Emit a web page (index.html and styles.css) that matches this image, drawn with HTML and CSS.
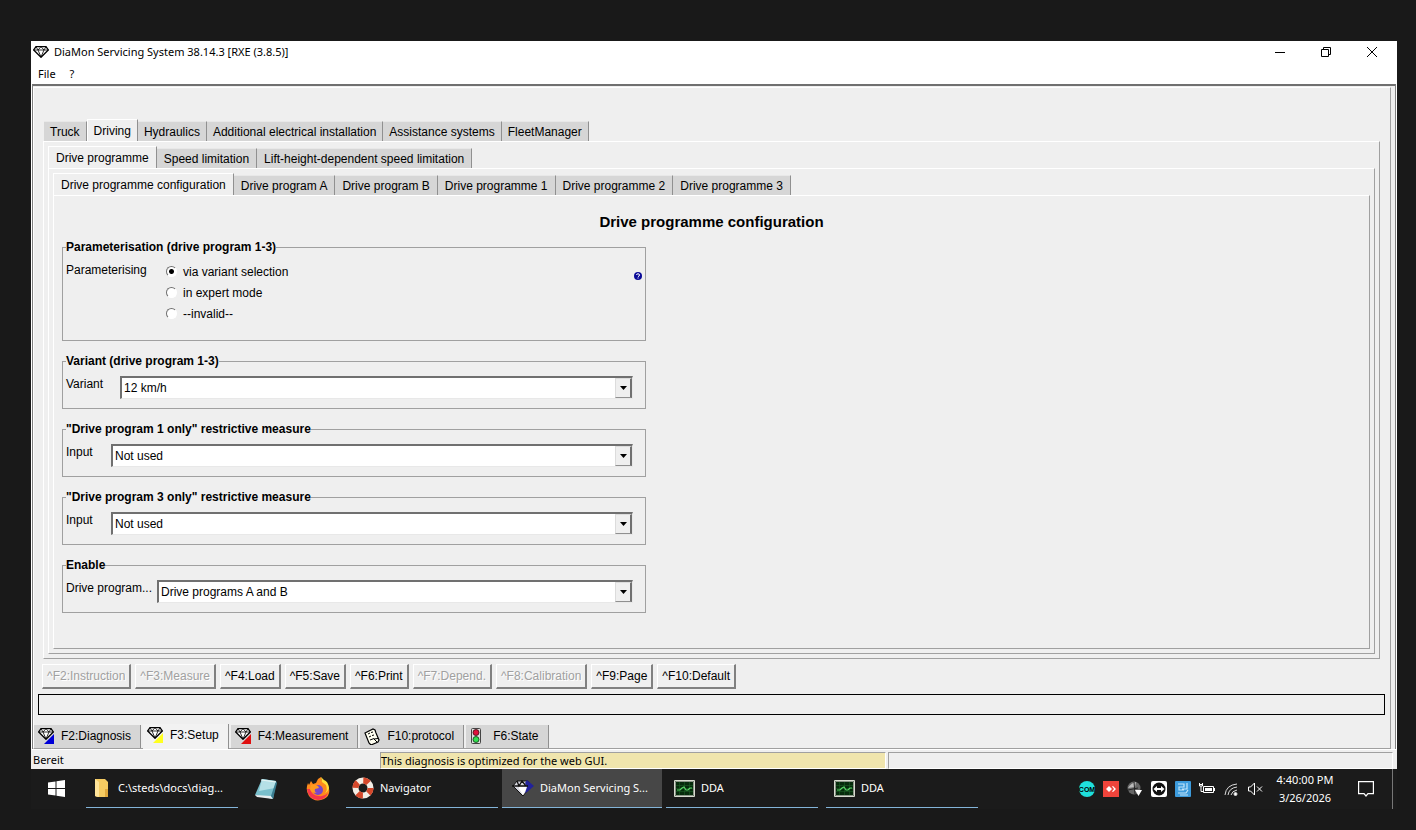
FILE: index.html
```html
<!DOCTYPE html>
<html lang="en">
<head>
    <meta charset="UTF-8">
    <meta name="viewport" content="width=device-width, initial-scale=1.0">
    <title>DiaMon Servicing System</title>
    <link rel="stylesheet" href="styles.css">
</head>
<body>
    <!-- Shared icons -->
    <svg class="sprite" aria-hidden="true">
        <symbol id="gem" viewBox="0 0 16 12">
            <path d="M3 .7h10L15.300 4 8 11.300.7 4z" fill="#fff" stroke="#000" stroke-width="1.300"/>
            <path d="M.7 4h14.600M3 .7L5 4l3-3.300L11 4l2-3.300M5 4l3 7 3-7" fill="none" stroke="#000" stroke-width=".8"/>
        </symbol>
        <symbol id="arrow" viewBox="0 0 7 4">
            <path d="M0 0h7L3.500 4z" fill="#000"/>
        </symbol>
        <symbol id="scope" viewBox="0 0 21 17">
            <path d="M.5.5h20v16H.5z" fill="#062b0c" stroke="#d8dcd0"/>
            <path d="M1.500 1.500h18v14h-18z" fill="none" stroke="#8b9488"/>
            <path d="M2 5.500h17M2 8.500h17M2 11.500h17M5.500 2v13M10.500 2v13M15.500 2v13" stroke="#1b5a25" stroke-width=".6"/>
            <path d="M3 10h3l2-2 2-1 2 3 2 0 2-2h2" fill="none" stroke="#59d867" stroke-width="1.200"/>
        </symbol>
    </svg>

    <div class="window">
        <header class="titlebar">
            <svg class="titlebar-icon"><use href="#gem"/></svg>
            <h1>DiaMon Servicing System 38.14.3 [RXE (3.8.5)]</h1>
            <div class="window-buttons">
                <button type="button" aria-label="Minimize"><svg viewBox="0 0 12 12"><path d="M1 6.500h10"/></svg></button>
                <button type="button" aria-label="Restore"><svg viewBox="0 0 12 12"><path d="M1.500 3.500h7v7h-7zM3.500 3.500v-2h7v7h-2"/></svg></button>
                <button type="button" aria-label="Close"><svg viewBox="0 0 12 12"><path d="M1 1l10 10M11 1L1 11"/></svg></button>
            </div>
        </header>
        <nav class="menubar">
            <button type="button">File</button>
            <button type="button">?</button>
        </nav>

        <main class="workspace">
            <div class="page">
                <div class="tab-group">
                    <div class="tabs" role="tablist">
                        <button type="button" role="tab" class="tab">Truck</button>
                        <button type="button" role="tab" class="tab selected" aria-selected="true">Driving</button>
                        <button type="button" role="tab" class="tab">Hydraulics</button>
                        <button type="button" role="tab" class="tab">Additional electrical installation</button>
                        <button type="button" role="tab" class="tab">Assistance systems</button>
                        <button type="button" role="tab" class="tab">FleetManager</button>
                    </div>
                    <div class="panel">
                        <div class="tabs" role="tablist">
                            <button type="button" role="tab" class="tab selected" aria-selected="true">Drive programme</button>
                            <button type="button" role="tab" class="tab">Speed limitation</button>
                            <button type="button" role="tab" class="tab">Lift-height-dependent speed limitation</button>
                        </div>
                        <div class="panel">
                            <div class="tabs" role="tablist">
                                <button type="button" role="tab" class="tab selected" aria-selected="true">Drive programme configuration</button>
                                <button type="button" role="tab" class="tab">Drive program A</button>
                                <button type="button" role="tab" class="tab">Drive program B</button>
                                <button type="button" role="tab" class="tab">Drive programme 1</button>
                                <button type="button" role="tab" class="tab">Drive programme 2</button>
                                <button type="button" role="tab" class="tab">Drive programme 3</button>
                            </div>
                            <form class="panel config">
                                <h2>Drive programme configuration</h2>

                                <fieldset class="group group-mode">
                                    <legend>Parameterisation (drive program 1-3)</legend>
                                    <span class="caption caption-mode">Parameterising</span>
                                    <div class="options">
                                        <label><input type="radio" name="mode" checked> via variant selection</label>
                                        <label><input type="radio" name="mode"> in expert mode</label>
                                        <label><input type="radio" name="mode"> --invalid--</label>
                                    </div>
                                    <button type="button" class="help" aria-label="Help">
                                        <svg viewBox="0 0 8 8"><circle cx="4" cy="4" r="4" fill="#0b0b98"/><path d="M2.500 3q0-1.200 1.500-1.200T5.500 3 4 4.600M4 5.500v1" fill="none" stroke="#fff"/></svg>
                                    </button>
                                </fieldset>

                                <fieldset class="group">
                                    <legend>Variant (drive program 1-3)</legend>
                                    <label class="caption caption-variant" for="variant">Variant</label>
                                    <div class="combo">
                                        <select id="variant"><option>12 km/h</option></select>
                                        <span class="combo-button"><svg><use href="#arrow"/></svg></span>
                                    </div>
                                </fieldset>

                                <fieldset class="group">
                                    <legend>"Drive program 1 only" restrictive measure</legend>
                                    <label class="caption caption-input" for="input1">Input</label>
                                    <div class="combo">
                                        <select id="input1"><option>Not used</option></select>
                                        <span class="combo-button"><svg><use href="#arrow"/></svg></span>
                                    </div>
                                </fieldset>

                                <fieldset class="group">
                                    <legend>"Drive program 3 only" restrictive measure</legend>
                                    <label class="caption caption-input" for="input3">Input</label>
                                    <div class="combo">
                                        <select id="input3"><option>Not used</option></select>
                                        <span class="combo-button"><svg><use href="#arrow"/></svg></span>
                                    </div>
                                </fieldset>

                                <fieldset class="group">
                                    <legend>Enable</legend>
                                    <label class="caption caption-enable" for="enable">Drive program...</label>
                                    <div class="combo">
                                        <select id="enable"><option>Drive programs A and B</option></select>
                                        <span class="combo-button"><svg><use href="#arrow"/></svg></span>
                                    </div>
                                </fieldset>
                            </form>
                        </div>
                    </div>
                </div>

                <div class="actions">
                    <button type="button" disabled>^F2:Instruction</button>
                    <button type="button" disabled>^F3:Measure</button>
                    <button type="button">^F4:Load</button>
                    <button type="button">^F5:Save</button>
                    <button type="button">^F6:Print</button>
                    <button type="button" disabled>^F7:Depend.</button>
                    <button type="button" disabled>^F8:Calibration</button>
                    <button type="button">^F9:Page</button>
                    <button type="button">^F10:Default</button>
                </div>

                <div class="message" role="status"></div>

                <div class="views" role="tablist">
                    <button type="button" role="tab" class="view">
                        <svg viewBox="0 0 17 17"><path d="M16 6v10H6z" fill="#0000d8"/><use href="#gem" width="16" height="12"/></svg>
                        F2:Diagnosis
                    </button>
                    <button type="button" role="tab" class="view selected" aria-selected="true">
                        <svg viewBox="0 0 17 17"><path d="M16 6v10H6z" fill="#ffff20"/><use href="#gem" width="16" height="12"/></svg>
                        F3:Setup
                    </button>
                    <button type="button" role="tab" class="view">
                        <svg viewBox="0 0 17 17"><path d="M16 6v10H6z" fill="#e01010"/><use href="#gem" width="16" height="12"/></svg>
                        F4:Measurement
                    </button>
                    <button type="button" role="tab" class="view">
                        <svg viewBox="0 0 17 17"><path d="M1 5l8-4 2 1 1 3 3 7-1 2-7 3-2-2z" fill="#fffff0" stroke="#000" stroke-width="1.200"/><path d="M4 6l2-1M7 4.500l2-.5M5 9l2-1M8 7.500l2-.5M6 12l4-1.500M13 14l-3-3 4-.5" fill="none" stroke="#000"/></svg>
                        F10:protocol
                    </button>
                    <button type="button" role="tab" class="view">
                        <svg viewBox="0 0 17 17"><rect x="1.500" y=".5" width="9" height="15" rx="1" fill="#ddd" stroke="#444"/><circle cx="6" cy="4.500" r="3" fill="#e0103c" stroke="#301010" stroke-width=".8"/><circle cx="6" cy="11.500" r="3" fill="#30e050" stroke="#103010" stroke-width=".8"/></svg>
                        F6:State
                    </button>
                </div>
            </div>
        </main>

        <footer class="statusbar">
            <span class="status-ready">Bereit</span>
            <span class="status-note">This diagnosis is optimized for the web GUI.</span>
            <span class="status-rest"></span>
        </footer>
    </div>

    <div class="taskbar">
        <button type="button" class="task task-icon task-start" aria-label="Start">
            <svg width="17" height="17" viewBox="0 0 17 17"><path d="M0 2.500L7.500 1.400V8H0zM8.500 1.200L17 0v8H8.500zM0 9h7.500v6.600L0 14.500zM8.500 9H17v8l-8.500-1.200z" fill="#fff"/></svg>
        </button>
        <button type="button" class="task running">
            <svg width="20" height="20" viewBox="0 0 20 20"><path d="M3 1h10l3 3v15H5l-2-1z" fill="#f5cb62"/><path d="M3 1l4 3v15l-4-1z" fill="#ffe49a"/><path d="M13 11h3v8h-3z" fill="#e0a83c"/></svg>
            C:\steds\docs\diag...
        </button>
        <button type="button" class="task task-icon" aria-label="Notepad">
            <svg width="24" height="22" viewBox="0 0 24 22"><path d="M8 1l14 2-3 18L1 17z" fill="#79bfcc"/><path d="M8 1l14 2-1 7L5 13z" fill="#b5e0e6"/><path d="M1 17l16 1 2 3L3 19z" fill="#e8eef0"/><path d="M22 3l1 2-4 16-2-3z" fill="#3b7e91"/><path d="M7 2l15 2" stroke="#e8f5f5"/></svg>
        </button>
        <button type="button" class="task task-icon" aria-label="Firefox">
            <svg width="24" height="24" viewBox="0 0 24 24"><path d="M2 6l1 2 2-4 2 3 3-1 2-4 3-2 1 4 3 0 3 4q4 10-4 14-9 4-15-3-4-6-1-13z" fill="#ff8a1c"/><path d="M15 0l1 5 4 3q2 5-1 8 3-1 4-5-1-7-5-8z" fill="#ffdf3a"/><path d="M1 12q1 10 11 11 7 0 10-7-4 4-9 3-7 0-9-7z" fill="#f4364c"/><circle cx="12" cy="13" r="5" fill="#7a45c9"/><path d="M5 8q4-1 7 1l1 2-4 1q-1 3 2 4-6 0-7-4z" fill="#ff9c1f"/></svg>
        </button>
        <button type="button" class="task running">
            <svg width="22" height="22" viewBox="0 0 22 22"><circle cx="11" cy="11" r="7.500" fill="none" stroke="#f4eee6" stroke-width="6"/><circle cx="11" cy="11" r="7.500" fill="none" stroke="#d5482b" stroke-width="6" stroke-dasharray="5.900 5.900"/></svg>
            Navigator
        </button>
        <button type="button" class="task running active">
            <svg width="22" height="17" viewBox="0 0 22 17"><path d="M5 1h11l3 5-8 10L1 6z" fill="#d8d8e0" stroke="#111"/><path d="M6 7h9l-4 8z" fill="#fff"/><path d="M15 0l7 6-7 6-2 1 2-6-2-4z" fill="#22229c"/><path d="M0 6h16M5 1l2 5 3-5 4 5" fill="none" stroke="#111" stroke-width="1.300"/></svg>
            DiaMon Servicing S...
        </button>
        <button type="button" class="task running spaced">
            <svg width="21" height="17"><use href="#scope"/></svg>
            DDA
        </button>
        <button type="button" class="task running spaced">
            <svg width="21" height="17"><use href="#scope"/></svg>
            DDA
        </button>

        <div class="tray">
            <svg viewBox="0 0 16 16"><circle cx="8" cy="8" r="8" fill="#1fe0dc"/><text x="8" y="11" class="com">COM</text></svg>
            <svg viewBox="0 0 16 16"><path d="M0 0h16v16H0z" fill="#ef443b"/><path d="M6 5l3 3-3 3-3-3z" fill="#fff"/><path d="M9 5.500L10 5l3 3-3 3-1-.5L11 8z" fill="#fff"/></svg>
            <svg viewBox="0 0 16 16"><circle cx="7" cy="7" r="6.500" fill="#666"/><path d="M1 7q3-5 8-6l-1 5z" fill="#bbb"/><path d="M1 9l10-2M7 1l1 12" stroke="#222"/><path d="M8 9h7l-3.500 6z" fill="#fff"/></svg>
            <svg viewBox="0 0 16 16"><rect width="16" height="16" rx="2" fill="#fff"/><circle cx="8" cy="8" r="6.500" fill="#111"/><path d="M2.500 8L6 5v2h4V5l3.500 3L10 11V9H6v2z" fill="#fff"/></svg>
            <svg viewBox="0 0 16 16"><rect width="16" height="16" rx="1" fill="#3d9bdc"/><path d="M3 3h6v3H4v3h5M12 2v6H7M3 12h8l2-3M5 14h8" fill="none" stroke="#c4e6fa" stroke-width="1.200"/></svg>
            <svg viewBox="0 0 16 16"><path d="M4.500 5.500h10v6h-10z" fill="none" stroke="#fff"/><path d="M6 7h7v3H6zM15 7h1v3h-1z" fill="#fff"/><path d="M.5 2v3h3V2M0 3.500h4M2 5v5.500h2" fill="none" stroke="#fff"/></svg>
            <svg viewBox="0 0 16 16" class="wifi"><path d="M2 14Q3 4 14 3M5 14q1-7 9-8M8 14q1-4 6-5"/><circle cx="12.500" cy="13" r="1.500" fill="#fff"/></svg>
            <svg viewBox="0 0 16 16"><path d="M1.500 6h2l4-4v12l-4-4h-2zM10 5.500l5 5M15 5.500l-5 5" fill="none" stroke="#fff"/></svg>
        </div>
        <time class="clock" datetime="2026-03-26T16:40"><span>4:40:00 PM</span><span>3/26/2026</span></time>
        <button type="button" class="notifications" aria-label="Notifications">
            <svg width="16" height="16" viewBox="0 0 16 16"><path d="M.6.6h14.800v12H10L8 15l-2-2.400H.6z" fill="none" stroke="#fff" stroke-width="1.200"/></svg>
        </button>
    </div>
</body>
</html>
```

FILE: styles.css
```css
/* General */
* {
    box-sizing: border-box;
}

body {
    display: flex;
    flex-direction: column;
    min-height: 100vh;
    margin: 0;
    padding: 41px 19px 21px 31px;
    background-color: #191919;
    color: #000;
    font-family: "Liberation Sans", Arial, sans-serif;
    font-size: 12px;
    line-height: 14px;
}

button {
    margin: 0;
    padding: 0;
    border: none;
    background: none;
    color: inherit;
    font: inherit;
    white-space: nowrap;
}

.sprite {
    position: absolute;
    width: 0;
    height: 0;
}

.window {
    display: flex;
    flex: 1;
    flex-direction: column;
    background-color: #fff;
}

/* Title and menu */
.titlebar,
.menubar,
.statusbar,
.taskbar {
    font-family: "Noto Sans", "Open Sans", sans-serif;
    font-size: 11px;
}

.titlebar {
    display: flex;
    align-items: center;
    height: 22px;
    padding: 0 2px;
}

.titlebar-icon {
    width: 16px;
    height: 12px;
    margin-right: 5px;
}

.titlebar h1 {
    margin: 0;
    font-size: 11px;
    font-weight: normal;
}

.window-buttons {
    display: flex;
    align-self: stretch;
    margin-left: auto;
}

.window-buttons button {
    display: grid;
    place-items: center;
    width: 46px;
}

.window-buttons svg {
    width: 12px;
    height: 12px;
    fill: none;
    stroke: #000;
}

.menubar {
    display: flex;
    gap: 14px;
    height: 21px;
    padding-left: 7px;
}

/* Work area */
.workspace {
    display: flex;
    flex: 1;
    margin: 0 1px;
    border: 1px solid #808080;
    border-top: 2px solid #707070;
    border-bottom: none;
    background-color: #efefef;
}

.page {
    display: flex;
    flex: 1;
    flex-direction: column;
    margin: 1px 4px 0 0;
    border: 1px solid #fff;
    border-right-color: #a0a0a0;
    border-bottom-color: #a0a0a0;
}

.tab-group {
    display: flex;
    flex: 1;
    flex-direction: column;
    margin: 31px 10px 0 9px;
}

.tabs {
    display: flex;
    align-items: flex-end;
    height: 22px;
    padding-left: 1px;
}

.tab {
    height: 20px;
    padding: 0 6px;
    border-right: 1px solid #909090;
    border-top: 1px solid #e8e8e8;
    background-color: #d6d6d6;
}

.panel .tab {
    padding: 0 7px;
}

.tab.selected {
    height: 23px;
    margin-bottom: -1px;
    border-left: 1px solid #fff;
    border-top-color: #fff;
    background-color: #efefef;
}

.tab.selected:first-child {
    margin-left: -1px;
}

.panel {
    display: flex;
    flex: 1;
    flex-direction: column;
    padding: 4px;
    border: 1px solid #fff;
    border-right-color: #a0a0a0;
    border-bottom-color: #a0a0a0;
}

/* Configuration form */
.config {
    padding: 16px 8px 20px;
}

.config h2 {
    margin: 0 0 8px;
    font-size: 15px;
    line-height: 20px;
    text-align: center;
}

.group {
    display: flex;
    align-items: flex-start;
    width: 584px;
    max-width: 100%;
    margin: 0 0 13px;
    padding: 8px 12px 9px 3px;
    border: 1px solid #a0a0a0;
}

.group legend {
    padding: 0;
    font-weight: bold;
    line-height: 14px;
}

.group-mode {
    padding: 8px 3px 15px;
}

.caption {
    flex: none;
    padding-top: 1px;
}

.caption-mode {
    width: 100px;
}

.caption-variant {
    width: 54px;
}

.caption-input {
    width: 45px;
}

.caption-enable {
    width: 91px;
}

.options {
    display: flex;
    flex: 1;
    flex-direction: column;
}

.options label {
    display: flex;
    align-items: center;
    gap: 6px;
    height: 21px;
    margin-top: -1px;
    margin-bottom: 1px;
}

.options input {
    appearance: none;
    width: 11px;
    height: 11px;
    margin: 0;
    border: 1px solid;
    border-color: #707070 #fff #fff #707070;
    border-radius: 50%;
    background-color: #fff;
}

.options input:checked {
    background-image: radial-gradient(circle, #000 2px, #fff 3px);
}

.help {
    margin-top: 10px;
}

.help svg {
    display: block;
    width: 8px;
    height: 8px;
}

.combo {
    position: relative;
    display: flex;
    flex: 1;
}

.combo select {
    appearance: none;
    width: 100%;
    height: 23px;
    padding: 0 20px 1px 2px;
    border: 1px solid #e8e8e8;
    border-top: 2px solid #707070;
    border-left: 2px solid #707070;
    border-radius: 0;
    background-color: #fff;
    color: #000;
    font: inherit;
}

.combo-button {
    position: absolute;
    top: 2px;
    right: 1px;
    bottom: 1px;
    display: grid;
    place-items: center;
    width: 17px;
    border: 1px solid #dcdcdc;
    border-right: 2px solid #707070;
    border-bottom: 1px solid #909090;
    background-color: #efefef;
    pointer-events: none;
}

.combo-button svg {
    width: 7px;
    height: 4px;
}

/* Function keys */
.actions {
    display: flex;
    gap: 4px;
    margin: 5px 8px 5px;
}

.actions button {
    height: 25px;
    padding: 0 4px;
    border: 1px solid #fff;
    border-right: 2px solid #808080;
    border-bottom: 2px solid #808080;
    background-color: #efefef;
}

.actions button:disabled {
    color: #a0a0a0;
    text-shadow: 1px 1px 0 #fff;
}

.message {
    height: 21px;
    margin: 0 5px 0 4px;
    border: 1px solid #000;
}

/* View tabs */
.views {
    display: flex;
    align-items: flex-end;
    gap: 2px;
    height: 33px;
}

.view {
    display: flex;
    align-items: center;
    gap: 6px;
    height: 23px;
    padding: 0 9px 1px 4px;
    border-right: 1px solid #909090;
    background-color: #d6d6d6;
}

.view svg {
    width: 17px;
    height: 17px;
}

.view.selected {
    height: 25px;
    margin-bottom: -1px;
    padding-bottom: 3px;
    background-color: #f2f2f2;
}

/* Status bar */
.statusbar {
    display: flex;
    gap: 2px;
    height: 20px;
    padding: 2px 4px 0 0;
    background-color: #efefef;
    border-top: 1px solid #fff;
    line-height: 16px;
}

.status-ready {
    width: 347px;
    padding-left: 2px;
}

.status-note {
    width: 506px;
    border: 1px solid #a0a0a0;
    border-right-color: #fff;
    border-bottom-color: #fff;
    background-color: #f0e5ad;
}

.status-rest {
    flex: 1;
    border: 1px solid #a0a0a0;
    border-right-color: #fff;
    border-bottom-color: #fff;
}

/* Taskbar */
.taskbar {
    display: flex;
    gap: 4px;
    height: 40px;
    padding-right: 4px;
    background-color: #1b1b1b;
    color: #fff;
}

.task {
    display: flex;
    align-items: center;
    gap: 6px;
    width: 152px;
    padding-left: 6px;
    border-bottom: 1px solid transparent;
    text-align: left;
}

.task svg {
    flex: none;
}

.task-icon {
    justify-content: center;
    width: 48px;
    padding: 0;
}

.task-start {
    width: 51px;
}

.running {
    border-bottom-color: #83b4d8;
    margin-bottom: 1px;
}

.active {
    width: 160px;
    padding-left: 10px;
    background-color: #474747;
}

.spaced {
    margin-right: 4px;
    padding-left: 8px;
}

.tray {
    display: flex;
    align-items: center;
    gap: 8px;
    margin-left: auto;
    margin-right: 8px;
}

.tray svg {
    width: 16px;
    height: 16px;
}

.com {
    font: bold 7px "Liberation Sans", Arial, sans-serif;
    text-anchor: middle;
}

.wifi {
    fill: none;
    stroke: #ddd;
}

.clock {
    display: flex;
    flex-direction: column;
    justify-content: center;
    width: 60px;
    line-height: 18px;
    text-align: center;
}

.notifications {
    display: grid;
    place-items: center;
    width: 54px;
    border-right: 1px solid #777;
}
```
